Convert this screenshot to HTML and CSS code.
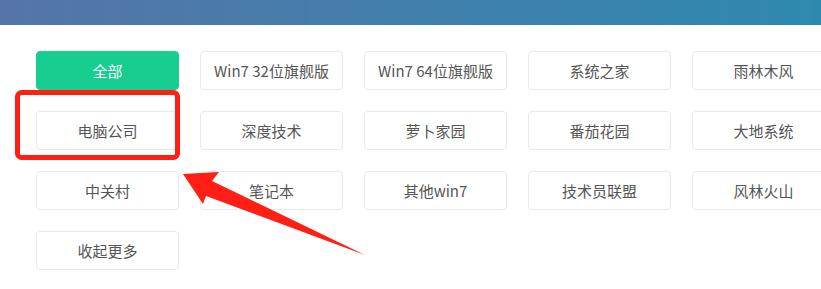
FILE: index.html
```html
<!DOCTYPE html>
<html lang="zh-CN">
<head>
    <meta charset="UTF-8">
    <meta name="viewport" content="width=device-width, initial-scale=1.0">
    <title>系统分类</title>
    <link rel="stylesheet" href="styles.css">
</head>
<body>

<div class="topbar"></div>

<div class="content">
    <div class="tags">
        <a class="tag active">全部</a>
        <a class="tag">Win7 32位旗舰版</a>
        <a class="tag">Win7 64位旗舰版</a>
        <a class="tag">系统之家</a>
        <a class="tag">雨林木风</a>
        <a class="tag">电脑公司</a>
        <a class="tag">深度技术</a>
        <a class="tag">萝卜家园</a>
        <a class="tag">番茄花园</a>
        <a class="tag">大地系统</a>
        <a class="tag">中关村</a>
        <a class="tag">笔记本</a>
        <a class="tag">其他win7</a>
        <a class="tag">技术员联盟</a>
        <a class="tag">风林火山</a>
        <a class="tag">收起更多</a>
    </div>

    <!-- 标注：红框 + 箭头 -->
    <svg class="mark" width="821" height="289" viewBox="0 0 821 289">
        <rect x="17.5" y="92.5" width="160" height="65" rx="4" fill="none" stroke="#ff1f14" stroke-width="5"/>
        <polygon points="183,174 219,172 212,181 365,255 206,196 203,204" fill="#ff1f14"/>
    </svg>
</div>

</body>
</html>
```

FILE: styles.css
```css
body, html {
    margin: 0;
    padding: 0;
    height: 100%;
    overflow: hidden;
    background: #fff;
}
.topbar {
    height: 25px;
    background: linear-gradient(to right, #5575a8, #2e89b1);
}
.content {
    position: relative;
    padding: 26px 0 0 36px;
}
.tags {
    display: grid;
    grid-template-columns: repeat(5, 143px);
    grid-auto-rows: 39px;
    column-gap: 21px;
    row-gap: 21px;
}
.tag {
    display: flex;
    align-items: center;
    justify-content: center;
    box-sizing: border-box;
    border: 1px solid #e9e9e9;
    border-radius: 4px;
    font-family: "Microsoft YaHei", "Noto Sans CJK SC", sans-serif;
    font-size: 15px;
    color: #555;
    white-space: nowrap;
    cursor: pointer;
}
.tag.active {
    background: #17cd8f;
    border-color: #17cd8f;
    color: #fff;
}
.mark {
    position: absolute;
    left: 0;
    top: -25px;
    pointer-events: none;
}
```
